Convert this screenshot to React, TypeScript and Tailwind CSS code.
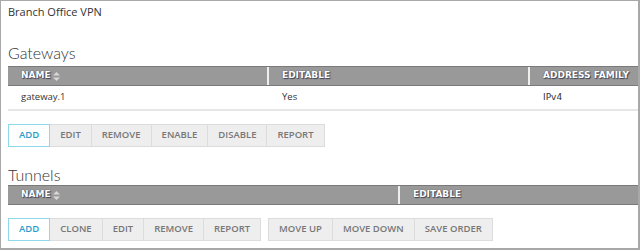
import React from "react";

const Sort = () => (
  <svg width="7" height="9" viewBox="0 0 7 9" className="ml-[2px] inline-block">
    <path d="M3.5 0 L7 3.5 L0 3.5 Z" fill="#d8d8d8" />
    <path d="M3.5 9 L7 5.5 L0 5.5 Z" fill="#d8d8d8" />
  </svg>
);

const hdr =
  "flex items-center h-full pl-[13px] text-[9px] font-bold text-white [text-shadow:0_0_1px_#334,1px_1px_1px_#445] [font-family:'DejaVu_Sans',Verdana,sans-serif]";

function Btn({ label, active }: { label: string; active?: boolean }) {
  return (
    <div
      className={
        active
          ? "h-[23px] px-[10px] flex items-center border border-[#8fd8ec] bg-white text-[#2a9ccc] text-[9.5px] font-semibold"
          : "h-[23px] px-[10px] flex items-center border border-[#dcdcdc] border-l-0 bg-[#eeeeee] text-[#777] text-[9.5px] font-semibold"
      }
    >
      {label}
    </div>
  );
}

export default function App() {
  return (
    <div className="w-[640px] h-[250px] bg-white border border-[#a8a8a8] border-r-2 border-b-2 pl-[7px] [font-family:'Open_Sans',sans-serif] text-[#333] overflow-hidden">
      <div className="pt-[3px] text-[11px] leading-[16px] text-[#333]">Branch Office VPN</div>
      <div className="mt-[23px] text-[16px] leading-[20px] font-light text-[#333] [font-family:Lato,sans-serif]">Gateways</div>
      <div className="mt-[3px] h-[20px] bg-[#999] border-y border-[#7a7a7a] flex">
        <div className="w-[261px] border-r-2 border-[#eee]">
          <div className={hdr}>
            NAME
            <Sort />
          </div>
        </div>
        <div className="w-[261px] border-r-2 border-[#eee]">
          <div className={hdr}>EDITABLE</div>
        </div>
        <div className="flex-1">
          <div className={hdr}>ADDRESS FAMILY</div>
        </div>
      </div>
      <div className="h-[25px] flex items-center border-b-2 border-[#e6e6e6] text-[9.5px] text-[#333]">
        <div className="w-[261px] pl-[13px]">gateway.1</div>
        <div className="w-[261px] pl-[13px]">Yes</div>
        <div className="flex-1 pl-[13px] text-[9px] [font-family:'DejaVu_Sans',Verdana,sans-serif]">IPv4</div>
      </div>
      <div className="mt-[13px] flex">
        <Btn label="ADD" active />
        <Btn label="EDIT" />
        <Btn label="REMOVE" />
        <Btn label="ENABLE" />
        <Btn label="DISABLE" />
        <Btn label="REPORT" />
      </div>
      <div className="mt-[18px] text-[16px] leading-[20px] font-light text-[#333] [font-family:Lato,sans-serif]">Tunnels</div>
      <div className="mt-[0px] h-[20px] bg-[#999] border-y border-[#7a7a7a] flex">
        <div className="w-[392px] border-r-2 border-[#eee]">
          <div className={hdr}>
            NAME
            <Sort />
          </div>
        </div>
        <div className="flex-1">
          <div className={hdr}>EDITABLE</div>
        </div>
      </div>
      <div className="mt-[13px] flex">
        <Btn label="ADD" active />
        <Btn label="CLONE" />
        <Btn label="EDIT" />
        <Btn label="REMOVE" />
        <Btn label="REPORT" />
        <div className="w-[7px]" />
        <div className="border-l border-[#dcdcdc] flex">
          <Btn label="MOVE UP" />
          <Btn label="MOVE DOWN" />
          <Btn label="SAVE ORDER" />
        </div>
      </div>
    </div>
  );
}
